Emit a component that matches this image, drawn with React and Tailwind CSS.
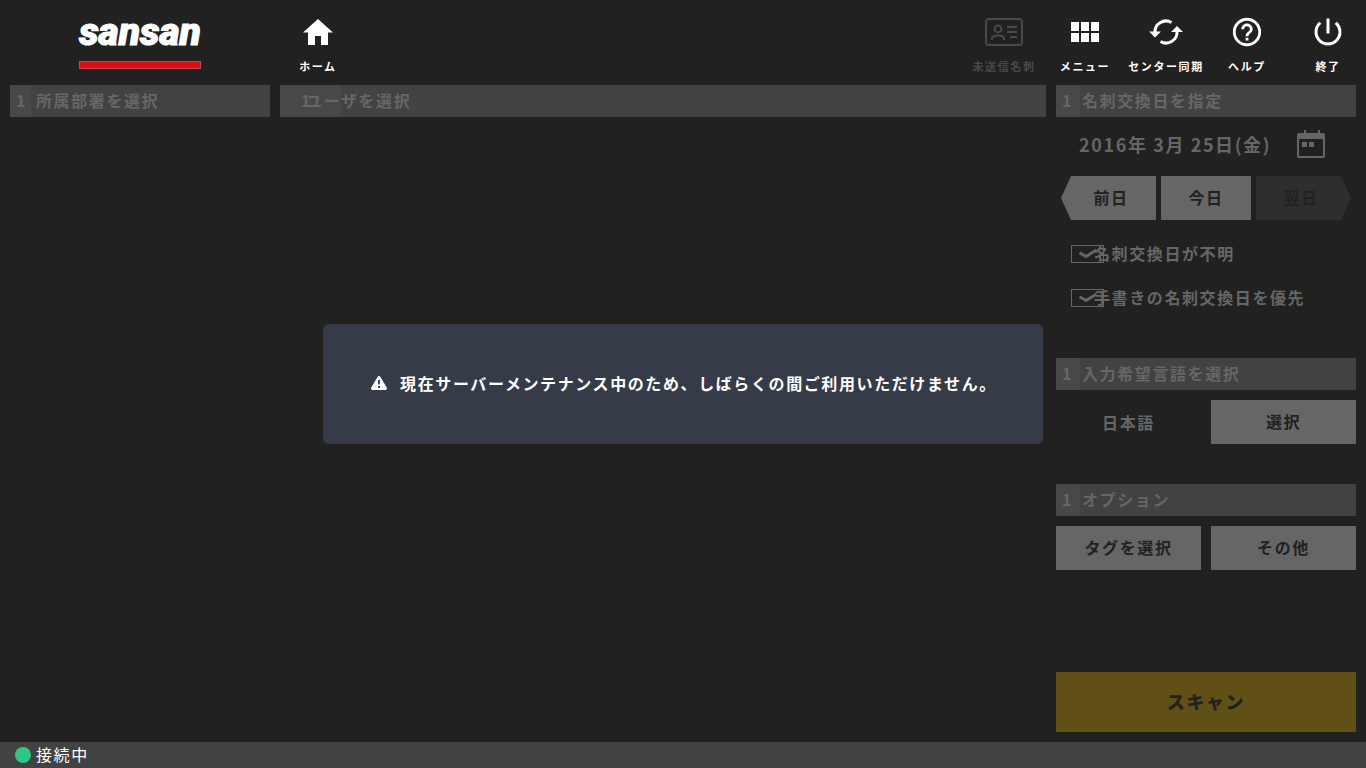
const SectionTitle = ({ children, numberClass = 'pl-[6px]' }) => (
  <h2 className="relative flex h-8 items-center bg-[#424242] pb-0.5 pl-[26px] font-bold text-[#666]">
    <span className={`absolute inset-y-0 left-0 flex w-[8%] items-center bg-[#484848] pb-0.5 ${numberClass}`}>1</span>
    <span className="relative">{children}</span>
  </h2>
);

const NavButton = ({ label, icon, disabled = false }) => (
  <button
    type="button"
    disabled={disabled}
    className="flex w-[76px] flex-col items-center whitespace-nowrap text-[11px] leading-4 font-bold text-white disabled:text-[#4a4a4a]"
  >
    <span className="flex h-9 items-center justify-center">{icon}</span>
    <span className="mt-2">{label}</span>
  </button>
);

const CheckRow = ({ id, label }) => (
  <div className="relative flex h-11 items-center pb-0.5 pl-[38px] font-bold">
    <input
      id={id}
      type="checkbox"
      defaultChecked
      className="peer absolute top-[13px] left-[15px] h-[18px] w-[33px] appearance-none border border-[#666]"
    />
    <svg
      viewBox="0 0 33 18"
      className="pointer-events-none invisible absolute top-[13px] left-[15px] h-[18px] w-[33px] peer-checked:visible"
      fill="none"
      stroke="#666"
      strokeWidth="3"
    >
      <path d="M8.5 7.8 L15 11.5 L25.5 5" />
    </svg>
    <label htmlFor={id} className="relative">{label}</label>
  </div>
);

const HomeIcon = () => (
  <svg width="30" height="26" viewBox="0 0 30 26" fill="currentColor">
    <path d="M15 0 L30 13.5 H25 V26 H18 V17 H12 V26 H5 V13.5 H0 Z" />
  </svg>
);

const CardIcon = () => (
  <svg width="38" height="28" viewBox="0 0 38 28" fill="none" stroke="currentColor" strokeWidth="2">
    <rect x="1" y="1" width="36" height="26" rx="2.5" />
    <circle cx="13" cy="11" r="3.4" />
    <path d="M7 22 V20.5 C7 16.5 19 16.5 19 20.5 V22" />
    <path d="M22 9 H32 M22 14 H32 M25 19 H32" />
  </svg>
);

const MenuIcon = () => (
  <svg width="28" height="20" viewBox="0 0 28 20" fill="currentColor">
    <path d="M0 0h8v9H0z M10 0h8v9h-8z M20 0h8v9h-8z M0 11h8v9H0z M10 11h8v9h-8z M20 11h8v9h-8z" />
  </svg>
);

const SyncIcon = () => (
  <svg width="34" height="26" viewBox="0 0 34 26" fill="none" stroke="currentColor" strokeWidth="3">
    <path d="M6 14 A11 11 0 0 1 22.5 3.5" />
    <path d="M28 12 A11 11 0 0 1 11.5 22.5" />
    <path d="M0 12.5 H12 L6 18.5 Z M22 13 H34 L28 7 Z" fill="currentColor" stroke="none" />
  </svg>
);

const HelpIcon = () => (
  <svg width="34" height="34" viewBox="0 0 24 24" fill="currentColor">
    <path d="M11 18h2v-2h-2v2zm1-16C6.48 2 2 6.48 2 12s4.48 10 10 10 10-4.48 10-10S17.52 2 12 2zm0 18c-4.41 0-8-3.59-8-8s3.59-8 8-8 8 3.59 8 8-3.59 8-8 8zm0-14c-2.21 0-4 1.79-4 4h2c0-1.1.9-2 2-2s2 .9 2 2c0 2-3 1.75-3 5h2c0-2.25 3-2.5 3-5 0-2.21-1.79-4-4-4z" />
  </svg>
);

const PowerIcon = () => (
  <svg width="36" height="36" viewBox="0 0 24 24" fill="currentColor">
    <path d="M13 3h-2v10h2V3zm4.83 2.17l-1.42 1.42C17.99 7.86 19 9.81 19 12c0 3.87-3.13 7-7 7s-7-3.13-7-7c0-2.19 1.01-4.14 2.58-5.42L6.17 5.17C4.23 6.82 3 9.26 3 12c0 4.97 4.03 9 9 9s9-4.03 9-9c0-2.74-1.23-5.18-3.17-6.83z" />
  </svg>
);

const CalendarIcon = () => (
  <svg width="28" height="28" viewBox="0 0 28 28" fill="#666">
    <path
      fillRule="evenodd"
      d="M2 3 H7 V0 H9 V3 H21 V0 H23 V3 H26 Q28 3 28 5 V26 Q28 28 26 28 H2 Q0 28 0 26 V5 Q0 3 2 3 Z M2 9 V26 H26 V9 Z"
    />
    <path d="M5 12h5v5H5z M12 12h5v5h-5z" />
  </svg>
);

const WarningIcon = () => (
  <svg width="16" height="14" viewBox="0 0 16 14">
    <path
      d="M8 0 C8.8 0 9.2 0.5 9.5 1 L15.7 11.5 C16.4 12.8 15.6 14 14.3 14 H1.7 C0.4 14 -0.4 12.8 0.3 11.5 L6.5 1 C6.8 0.5 7.2 0 8 0 Z"
      fill="#fff"
    />
    <path d="M7 4 H9 L8.8 8.5 H7.2 Z M7 10 H9 V12 H7 Z" fill="#353b47" />
  </svg>
);

const grayButton = 'h-11 bg-[#666] pb-0.5 font-bold text-[#212121]';

const App = () => {
  return (
    <div className="flex min-h-screen flex-col bg-[#212121] font-['Noto_Sans_CJK_JP',sans-serif] text-base leading-6 tracking-widest text-[#666]">
      <header className="flex h-[85px] items-start pt-[9px]">
        <a href="/" className="ml-[79px] flex w-[122px] flex-col text-white">
          <span className="text-center font-['Roboto',sans-serif] text-[39px] leading-[46px] font-black tracking-normal italic [-webkit-text-stroke:1px_#fff]">
            sansan
          </span>
          <span className="mt-[6px] h-2 border border-[#b84a50] bg-[#dc0d17]" />
        </a>
        <div className="mt-[5px] ml-[79px]">
          <NavButton label="ホーム" icon={<HomeIcon />} />
        </div>
        <nav className="mt-[5px] ml-auto flex gap-[5px]">
          <NavButton label="未送信名刺" icon={<CardIcon />} disabled />
          <NavButton label="メニュー" icon={<MenuIcon />} />
          <NavButton label="センター同期" icon={<SyncIcon />} />
          <NavButton label="ヘルプ" icon={<HelpIcon />} />
          <NavButton label="終了" icon={<PowerIcon />} />
        </nav>
      </header>

      <main className="flex flex-1 gap-[10px] px-[10px] pb-[10px]">
        <section className="w-[260px]">
          <SectionTitle>所属部署を選択</SectionTitle>
        </section>

        <section className="flex-1">
          <SectionTitle numberClass="pl-[21px]">ユーザを選択</SectionTitle>
        </section>

        <aside className="flex w-[300px] flex-col">
          <SectionTitle>名刺交換日を指定</SectionTitle>
          <div className="flex h-[59px] items-center justify-between pr-[31px] pb-[5px] pl-[23px]">
            <span className="text-lg font-bold">2016年 3月 25日(金)</span>
            <button type="button" aria-label="カレンダー">
              <CalendarIcon />
            </button>
          </div>
          <div className="flex gap-[5px] px-[5px]">
            <button type="button" className={`${grayButton} w-[95px] pl-[5px] [clip-path:polygon(10px_0,100%_0,100%_100%,10px_100%,0_50%)]`}>
              前日
            </button>
            <button type="button" className={`${grayButton} flex-1`}>今日</button>
            <button
              type="button"
              disabled
              className="h-11 w-[95px] bg-[#2e2e2e] pr-[5px] pb-0.5 font-bold text-[#212121] [clip-path:polygon(0_0,85px_0,100%_50%,85px_100%,0_100%)]"
            >
              翌日
            </button>
          </div>
          <div className="mt-3">
            <CheckRow id="unknown-date" label="名刺交換日が不明" />
            <CheckRow id="handwritten-date" label="手書きの名刺交換日を優先" />
          </div>

          <div className="mt-[38px]">
            <SectionTitle>入力希望言語を選択</SectionTitle>
            <div className="mt-[10px] grid grid-cols-2 items-center gap-[10px]">
              <span className="text-center font-bold">日本語</span>
              <button type="button" className={grayButton}>選択</button>
            </div>
          </div>

          <div className="mt-10">
            <SectionTitle>オプション</SectionTitle>
            <div className="mt-[10px] grid grid-cols-2 gap-[10px]">
              <button type="button" className={grayButton}>タグを選択</button>
              <button type="button" className={grayButton}>その他</button>
            </div>
          </div>

          <button type="button" className="mt-auto h-[60px] bg-[#615015] pb-0.5 text-lg font-black text-[#212121]">
            スキャン
          </button>
        </aside>
      </main>

      <footer className="flex h-[26px] items-center gap-[5px] bg-[#424242] pl-[15px] text-white">
        <span className="size-4 rounded-full bg-[#31c586]" />
        <span className="pb-0.5">接続中</span>
      </footer>

      <div className="fixed inset-0 flex items-center justify-center">
        <div
          role="alertdialog"
          aria-label="メンテナンス"
          className="flex min-h-[120px] w-[720px] max-w-full items-center justify-center gap-[11px] rounded-md bg-[#353b47] pb-0.5 font-bold text-white"
        >
          <span className="flex w-5 justify-center">
            <WarningIcon />
          </span>
          <p>現在サーバーメンテナンス中のため、しばらくの間ご利用いただけません。</p>
        </div>
      </div>
    </div>
  );
};

export default App;
